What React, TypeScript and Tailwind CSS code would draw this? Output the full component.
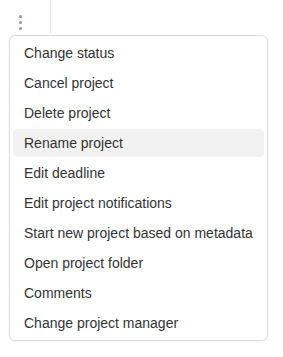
import React from "react";

const items = [
  "Change status",
  "Cancel project",
  "Delete project",
  "Rename project",
  "Edit deadline",
  "Edit project notifications",
  "Start new project based on metadata",
  "Open project folder",
  "Comments",
  "Change project manager",
];

export default function App() {
  return (
    <div className="w-[283px] h-[357px] bg-white" style={{ fontFamily: '"Liberation Sans", Arial, sans-serif' }}>
      <div className="h-[33px] w-[51px] border-r border-[#e3e3e3] flex justify-center">
        <div className="flex flex-col items-center gap-[3px] pt-[15px] mr-[10px]">
          <span className="block w-[3px] h-[3px] rounded-full bg-[#8a95a8]" />
          <span className="block w-[3px] h-[3px] rounded-full bg-[#8a95a8]" />
          <span className="block w-[3px] h-[3px] rounded-full bg-[#8a95a8]" />
        </div>
      </div>
      <div className="ml-[9px] mt-[2px] w-[259px] border border-[#dcdcdc] rounded-[6px] bg-white px-[3px] py-[2px] shadow-[0_1px_2px_rgba(0,0,0,0.04)]">
        {items.map((t) => (
          <div key={t} className="h-[30px] py-[1px]">
            <div
              className={
                "h-[28px] flex items-center pl-[11px] rounded-[5px] text-[14px] text-[#333] " +
                (t === "Rename project" ? "bg-[#f2f2f2]" : "")
              }
            >
              {t}
            </div>
          </div>
        ))}
      </div>
    </div>
  );
}
